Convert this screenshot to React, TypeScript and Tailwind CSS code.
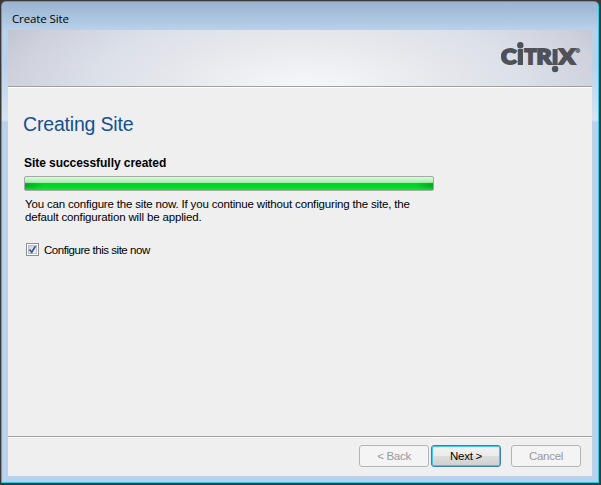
function CitrixLogo() {
  return (
    <svg className="h-9 w-20" width="80" height="36" viewBox="0 0 80 36" fill="#505156" aria-label="Citrix">
      <g fontFamily="Lato, 'Open Sans', sans-serif" fontWeight="900" fontSize="20.5" stroke="#505156" strokeWidth="1.8">
        <text x="0" y="24.1" textLength="15.4" lengthAdjust="spacingAndGlyphs">C</text>
        <text x="23.4" y="24.1" textLength="12" lengthAdjust="spacingAndGlyphs">T</text>
        <text x="35.4" y="24.1" textLength="15" lengthAdjust="spacingAndGlyphs">R</text>
        <text x="58" y="24.1" textLength="16" lengthAdjust="spacingAndGlyphs">X</text>
      </g>
      <circle cx="19.3" cy="5.2" r="3.2" />
      <rect x="16.8" y="9" width="5.2" height="16" />
      <rect x="51.6" y="9" width="5" height="16" />
      <circle cx="54.1" cy="29" r="3.2" />
      <text x="74.6" y="13" fontFamily="Liberation Sans, sans-serif" fontSize="6" stroke="#505156" strokeWidth="0.3">®</text>
    </svg>
  );
}

export default function App() {
  return (
    <div className="h-[485px] w-[601px] overflow-hidden bg-[#3b3737] pt-px pl-px font-['Liberation_Sans',Arial,sans-serif] text-[11px] text-black">
      <div className="flex h-[482px] w-[598px] flex-col rounded-t-[5px] border border-t-[#8b8c90] border-r-[#26cfeb] border-b-[#1bcbe7] border-l-[#8a8d91] bg-[linear-gradient(to_bottom,#99b4d1_0px,#b9d1ea_28px,#b9d1ea_60px,#d7e4f2_118px,#b9d1ea_120px)] px-1.5 pb-1.5">
        <div className="h-7 shrink-0 pt-[9px] pl-1 font-['Open_Sans',sans-serif] text-[11.5px] leading-4">
          <span className="inline-block tracking-[-0.12px]">Create Site</span>
        </div>
        <div className="flex min-h-0 flex-1 flex-col bg-[#efefef]">
          <header className="h-[58px] shrink-0 border-b border-white">
            <div className="flex h-[57px] w-full justify-end border-b border-[#a0a0a0] bg-[radial-gradient(ellipse_340px_130px_at_300px_60px,#f7f8fa_0%,#e4e6eb_44%,#dce0e9_63%,#ced1dc_88%,#bfc3cf_100%)] pt-[10px] pr-[11px]">
              <CitrixLogo />
            </div>
          </header>
          <main className="flex-1 pl-4">
            <h1 className="mt-[22px] ml-[-1px] h-7 text-[19.5px] leading-7 tracking-[-0.18px] whitespace-nowrap text-[#164f91]">Creating Site</h1>
            <h2 className="mt-[17px] h-4 text-[12px] leading-4 font-bold tracking-[-0.05px] whitespace-nowrap">Site successfully created</h2>
            <div className="mt-[5px] h-[15px] w-[410px] rounded-[2px] border border-[#a8a8a8] bg-[linear-gradient(#d3ffd7_0px,#a6ebad_6px,#00d329_6px,#00d329_9px,#18e531_13px)]">
              <div className="h-full bg-[linear-gradient(to_right,#087f1c88_0px,transparent_17px,transparent_391px,#087f1c88_408px)] [mask-image:linear-gradient(transparent_0px,transparent_5px,black_7px,black_9px,transparent_14px)]" />
            </div>
            <p className="mt-[7px] ml-px text-[11.5px] leading-[13px] whitespace-nowrap">
              <span className="block tracking-[-0.17px]">You can configure the site now. If you continue without configuring the site, the</span>
              <span className="block tracking-[-0.15px]">default configuration will be applied.</span>
            </p>
            <label className="mt-[18px] ml-[2px] flex h-[15px] items-center gap-[5px]">
              <span className="flex size-[13px] items-center justify-center border border-[#8e8f8f] bg-white">
                <span className="flex size-[9px] items-center justify-center border border-[#b8bfca] bg-linear-to-br from-[#cbd1dd] to-[#f5f5f5]">
                  <svg className="size-[9px] shrink-0" viewBox="0 0 9 9" fill="none">
                    <path d="M1.5 4.5 3.7 7.2 7.4 1.2" stroke="#405795" strokeWidth="1.7" />
                  </svg>
                </span>
              </span>
              <span className="pt-[2px] text-[11.5px] tracking-[-0.46px]">Configure this site now</span>
            </label>
          </main>
          <footer className="h-10 shrink-0 border-t border-[#a0a0a0]">
            <div className="flex justify-end border-t border-white pt-[7px] pr-[11px]">
              <button className="h-[22px] w-[70px] rounded-[3px] border border-[#b0b5b8] bg-[#f4f4f4] text-[11.5px] leading-5 tracking-[-0.3px] text-[#989898]">&lt; Back</button>
              <button className="ml-[2px] h-[22px] w-[70px] rounded-[3px] border border-[#3c7fb1] bg-[linear-gradient(#f3f3f3_0%,#ebebeb_48%,#dddddd_52%,#d0d0d0_100%)] text-[11.5px] leading-5 tracking-[-0.3px] shadow-[inset_0_0_0_1px_#43c7ee]">Next &gt;</button>
              <button className="ml-[10px] h-[22px] w-[70px] rounded-[3px] border border-[#b0b5b8] bg-[#f4f4f4] text-[11.5px] leading-5 tracking-[-0.3px] text-[#989898]">Cancel</button>
            </div>
          </footer>
        </div>
      </div>
    </div>
  );
}
